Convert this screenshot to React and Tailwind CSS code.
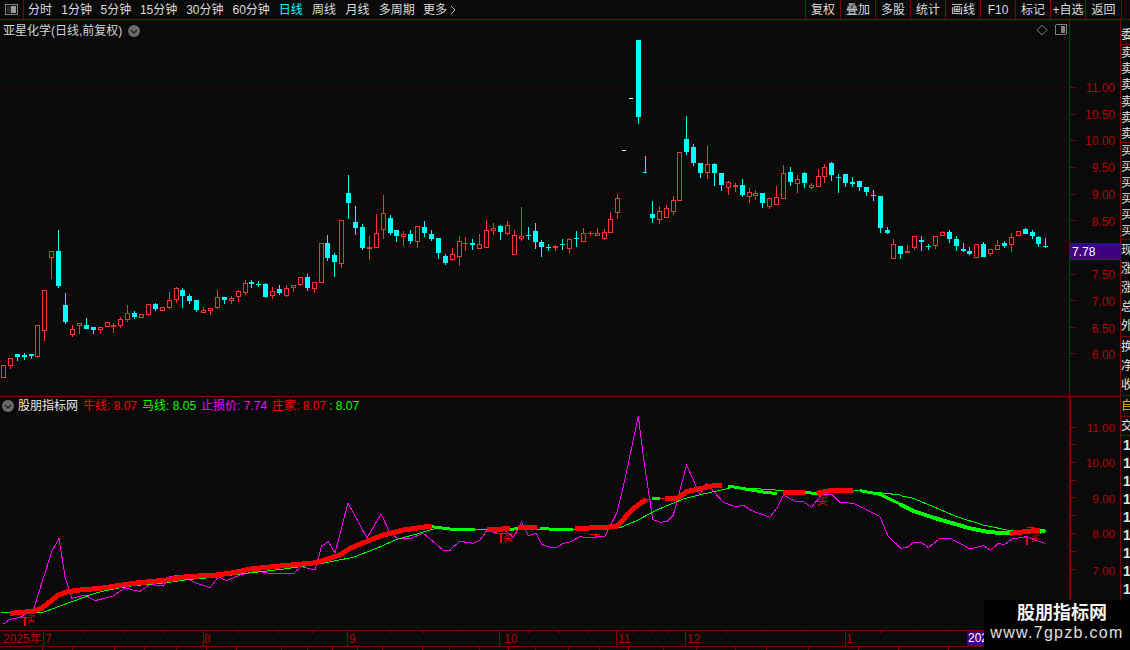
import React from 'react';

// candle rows: x, bodyTop, bodyBottom, wickTop, wickBottom (wick 0 = none), all in zoomed crop units
const RED = '#ff3232';
const CYAN = '#00ffff';

const seg1 = [
  ['r',10,436,473],['r',31,415,437,0,447],['c',52,402,411,0,422],['c',73,405,411,399,420],['c',94,402,408,0,416],
  ['r',112,316,410,0,413],['r',133,211,332,0,362],['r',154,94,113,0,177],['c',175,93,198,30,204],['c',196,255,306,219,312],
  ['r',217,328,344,316,350],['r',238,310,317,0,342],['c',259,315,327,294,0],['c',280,321,330,0,342],['r',301,322,329,0,342],
  ['r',322,307,320],['r',340,316,320,309,339],['r',361,298,318,292,324],['r',382,280,299,255,306],['c',403,279,291,273,297],
  ['r',424,283,293],['r',445,253,284,0,288],['c',466,252,267,249,273],['r',487,262,272],['r',508,241,263,216,267],
  ['r',529,205,239,202,249],['c',547,210,228,204,264],['c',568,228,244,222,252],['c',589,240,270,0,276],['r',610,271,278,262,0],
  ['r',631,265,272,0,285],['r',652,232,263,210,267],['c',673,232,240,0,252],['r',694,235,242,228,252],['r',715,214,231,210,246],
  ['r',736,190,218,180,225],['c',754,186,192,180,204],['c',775,191,194,183,201],['c',796,192,231,189,234],['r',817,214,227,201,237],
  ['c',838,207,219,195,225],['r',859,205,227,195,231],['r',880,196,203,0,216],['r',901,172,194,0,198],['c',922,171,204,162,213],
  ['r',943,187,206,0,219],['r',964,70,188],['c',982,69,114,45,123],['c',1003,105,126,99,171],
];
const seg2 = [
  ['r',4,181,313,0,323],['c',25,99,129,45,177],['c',46,186,204,138,225],['c',67,201,264,192,270],['r',88,262,267,228,300],
  ['r',109,220,263,162,0],['r',130,160,209,105,237],['c',151,174,219,165,225],['c',169,210,228,0,246],['r',190,221,230,213,258],
  ['c',211,222,243,210,252],['r',232,199,245,0,264],['c',253,201,219,183,231],['c',274,222,237,210,243],['c',295,234,279,0,297],
  ['c',316,288,309,282,315],['r',337,283,300,264,303],['r',358,244,290,228,318],['r',376,250,252,231,273],['c',397,249,255,237,270],
  ['r',418,253,266,222,0],['r',439,211,263,180,0],['r',460,205,212,189,225],['c',481,198,216,195,240],['r',502,195,221,183,225],
  ['r',523,226,284,210,0],['r',544,229,236,141,243],['c',565,225,228,201,240],['c',586,213,246,189,267],['c',604,247,261,240,291],
  ['c',625,261,264,252,273],['r',646,259,265,255,273],['c',667,252,255,237,270],['r',688,238,266,234,279],['c',709,234,237,213,261],
  ['r',730,220,245,204,0],['r',751,218,221,213,228],['r',772,220,227,204,0],['r',793,217,236,207,240],['r',811,178,218,156,0],
  ['r',832,115,158,102,177],
];
const seg3 = [
  ['c',115,30,261,0,282],['c',157,552,564,513,579],['r',178,544,570,528,582],['r',199,535,563,525,0],['r',220,511,545,498,555],
  ['r',238,367,512],['c',259,327,366,258,375],['c',280,351,399,342,408],['c',301,399,429,0,444],['r',322,403,429,348,447],
  ['c',343,402,429,399,468],['c',364,429,465,0,483],['r',385,457,473,453,495],['r',406,466,470,459,486],['c',427,465,495,447,501],
  ['r',448,487,500,474,519],['r',466,489,497,480,510],['c',487,489,519,0,534],['r',508,505,530,0,537],['r',529,502,525,468,0],
  ['r',550,430,506,405,0],['c',571,426,456,411,468],['r',592,448,461,435,489],['c',613,429,459,426,474],['r',634,466,473,459,477],
  ['r',655,439,470,417,0],['r',673,412,440,402,459],['c',694,399,435,396,453],['c',715,441,444,432,489],['c',736,432,459,0,471],
];
const seg4 = [
  ['c',15,72,99,0,111],['c',37,96,102,81,111],['c',58,93,111,0,123],['c',79,111,126,0,138],['c',100,135,138,120,153],
  ['c',121,138,234,0,249],['c',142,240,249,231,252],['r',160,283,326,267,0],['c',181,288,312,0,327],['r',202,304,309,285,0],
  ['r',223,259,293,0,300],['c',244,270,276,258,303],['c',265,288,292,282,300],['r',286,259,288,0,297],['r',307,247,257,244,0],
  ['c',328,247,267,240,279],['c',349,267,288,258,303],['c',370,297,303,279,306],['c',388,303,312,291,315],['r',409,283,323],
  ['c',430,282,321,276,0],['r',451,298,311,0,318],['r',472,286,299,270,0],['c',493,279,288,273,294],['r',514,262,285,249,306],
  ['r',535,244,257],['c',556,237,252,234,0],['c',577,247,258,240,267],['c',595,261,282,258,291],['c',616,289,292,264,294],
];

const toReal = (rows, ox, oy) =>
  rows.map(([k, x, t, b, wt = 0, wb = 0]) => ({
    k,
    x: ox + Math.floor(x / 3),
    t: oy + Math.round(t / 3),
    b: oy + Math.round(b / 3),
    wt: wt ? oy + Math.round(wt / 3) : 0,
    wb: wb ? oy + Math.round(wb / 3) : 0,
  }));

const candles = [
  ...toReal(seg1, 0, 220),
  ...toReal(seg2, 340, 160),
  ...toReal(seg3, 600, 30),
  ...toReal(seg4, 840, 150),
];

function Candle({ c }) {
  const color = c.k === 'r' ? RED : CYAN;
  const h = c.b - c.t;
  return (
    <g>
      {c.wt > 0 && <rect x={c.x} y={c.wt} width={1} height={c.t - c.wt} fill={color} />}
      {c.wb > 0 && <rect x={c.x} y={c.b} width={1} height={c.wb - c.b} fill={color} />}
      {c.k === 'c' || h <= 2 ? (
        <rect x={c.x - 2} y={c.t} width={5} height={Math.max(h, 1)} fill={color} />
      ) : (
        <rect x={c.x - 1.5} y={c.t + 0.5} width={4} height={h - 1} fill="#0a0a0a" stroke={color} strokeWidth={1} />
      )}
    </g>
  );
}

const Grid = ({ ys, w }) =>
  ys.map((y) => (
    <line key={y} x1={0} x2={w} y1={y + 0.5} y2={y + 0.5} stroke="#500000" strokeDasharray="1 3" />
  ));

function PriceChart() {
  return (
    <svg width={1070} height={376} viewBox="0 20 1070 376" shapeRendering="crispEdges" className="block">
      <Grid ys={[87, 140, 193, 246, 300, 353]} w={1066} />
      {candles.map((c, i) => <Candle key={i} c={c} />)}
      {/* white dashes and the lone gap day after the limit-up run */}
      <rect x={622} y={150} width={4} height={1} fill="#ffffff" />
      <rect x={629} y={98} width={4} height={1} fill="#ffffff" />
      <rect x={645} y={156} width={1} height={17} fill={CYAN} />
      <rect x={643} y={172} width={4} height={1} fill={CYAN} />
      {/* diamond + panel toggle */}
      <path d="M1042 25l5 5-5 5-5-5z" fill="none" stroke="#707070" shapeRendering="auto" />
      <rect x={1055.5} y={24.5} width={11} height={10} rx={1.5} fill="none" stroke="#808080" />
      <rect x={1061} y={26} width={4} height={7} fill="#808080" />
    </svg>
  );
}

// polylines, crop units -> real pixels
const pts = (list, ox, oy) =>
  list.map(([x, y]) => `${ox + x / 3},${oy + y / 3}`).join(' ');

const magenta = [
  pts([[10,312],[30,298],[60,292],[100,270],[155,95],[177,55],[195,170],[215,235],[255,225],[285,242],[340,228],[375,203],[400,210],[420,214],[450,193],[490,198],[510,170],[540,165],[590,190],[630,203],[655,170],[680,182],[720,165],[770,153],[810,160],[880,160],[905,140],[945,150],[965,78],[985,65],[1005,100]], 0, 520),
  '348,503 360,525 367,538 381,514 390,533 397,538 410,539 423,533 443,550 450,550',
  pts([[0,449],[30,424],[70,430],[90,420],[110,392],[135,397],[165,392],[190,412],[215,366],[235,408],[258,400],[275,433],[300,442],[320,442],[340,430],[360,426],[390,410],[420,414],[465,408],[500,340],[520,260],[565,48],[580,170],[608,358],[630,367],[650,365],[670,345],[710,195],[750,285],[770,250],[800,285],[820,307],[855,320],[880,316],[905,332],[960,352],[980,325],[1000,285],[1040,305],[1060,305],[1085,322],[1115,283],[1145,283],[1170,307],[1210,310],[1290,350],[1315,410],[1350,442]], 450, 400),
  pts([[0,505],[20,503],[40,488],[65,488],[85,503],[120,475],[150,475],[180,490],[210,507],[250,497],[272,511],[295,490],[312,495],[335,477],[380,470],[410,482],[435,490]], 900, 380),
].join(' ');

const thinGreen = [
  pts([[3,278],[60,278],[130,277],[180,258],[230,240],[290,218],[350,205],[400,197],[500,188],[570,178],[640,172],[720,162],[800,153],[860,146],[950,133],[1060,112],[1130,85],[1190,58],[1250,42],[1290,30],[1320,23],[1350,27]], 0, 520),
  pts([[0,387],[100,390],[180,388],[300,387],[400,388],[510,383],[560,362],[620,330],[700,297],[760,282],[850,262],[950,268],[1010,273],[1100,280],[1230,272],[1290,278],[1350,285]], 450, 400),
  pts([[0,347],[40,355],[100,380],[170,410],[250,435],[330,452],[420,455]], 900, 380),
].join(' ');

const thick = [
  ['r', 5, pts([[30,280],[100,274],[125,265],[150,245],[175,225],[200,216],[240,210],[300,205],[400,190],[500,180],[560,170],[650,165],[700,158],[750,147],[850,137],[950,128],[1020,105],[1050,85],[1090,68],[1150,45],[1210,30],[1295,18]], 0, 520)],
  ['g', 3, pts([[1295,20],[1350,27]], 0, 520)],
  ['g', 3, pts([[0,387],[75,390]], 450, 400)],
  ['r', 5, pts([[110,389],[180,386]], 450, 400)],
  ['g', 3, pts([[180,388],[205,386]], 450, 400)],
  ['r', 5, pts([[205,384],[260,383]], 450, 400)],
  ['g', 3, pts([[270,386],[370,390]], 450, 400)],
  ['r', 5, pts([[375,386],[500,380],[550,325],[590,298]], 450, 400)],
  ['r', 1, pts([[590,298],[605,297]], 450, 400)],
  ['g', 3, pts([[605,296],[630,296]], 450, 400)],
  ['r', 1, pts([[630,296],[645,296]], 450, 400)],
  ['r', 5, pts([[645,296],[680,296],[710,275],[800,255],[815,255]], 450, 400)],
  ['g', 3, pts([[835,258],[950,278],[980,280]], 450, 400)],
  ['r', 5, pts([[1000,279],[1065,278]], 450, 400)],
  ['g', 3, pts([[1065,278],[1100,280]], 450, 400)],
  ['r', 5, pts([[1100,280],[1140,272],[1210,272]], 450, 400)],
  ['g', 3, pts([[1230,272],[1290,283],[1350,312]], 450, 400)],
  ['g', 4, pts([[0,372],[40,393],[100,413],[210,445],[270,457],[330,459]], 900, 380)],
  ['r', 5, pts([[330,460],[420,450]], 900, 380)],
  ['g', 4, pts([[420,455],[437,451]], 900, 380)],
];

const markers = [
  { x: 24, y: 617, h: 9, w: 8 },
  { x: 500, y: 533, h: 10, w: 12 },
  { x: 595, y: 534, h: 3, w: 10 },
  { x: 1026, y: 537, h: 8, w: 10 },
];

function IndicatorChart() {
  return (
    <svg width={1070} height={233} viewBox="0 397 1070 233" shapeRendering="crispEdges" className="block">
      <Grid ys={[425, 461, 497, 533, 570, 606]} w={1066} />
      <polyline points={magenta} fill="none" stroke="#ff00ff" strokeWidth={1} />
      <polyline points={thinGreen} fill="none" stroke="#00ff00" strokeWidth={1} />
      {thick.map(([k, w, p], i) => (
        <polyline key={i} points={p} fill="none" stroke={k === 'r' ? '#ff0000' : '#00ff00'} strokeWidth={w} />
      ))}
      {markers.map((m) => (
        <g key={m.x} fill="#ff0000">
          <rect x={m.x} y={m.y} width={2} height={m.h} />
          <rect x={m.x - m.w / 2} y={m.y} width={m.w} height={1} />
        </g>
      ))}
      <rect x={1027} y={527} width={8} height={1} fill="#ff0000" />
      <text x={816} y={505} fontSize={12} fill="#ff0000">买</text>
      <text x={503} y={541} fontSize={10} fill="#ff0000">买</text>
      <text x={1031} y={541} fontSize={9} fill="#ff0000">买</text>
      <text x={27} y={622} fontSize={8} fill="#ff0000">买</text>
    </svg>
  );
}

function Axis({ height, originY, labels, ticks }) {
  return (
    <svg width={50} height={height} viewBox={`1071 ${originY} 50 ${height}`} shapeRendering="crispEdges" className="block">
      {ticks.map((y) => (
        <rect key={y} x={1071} y={y} width={5} height={1} fill="#8b0000" />
      ))}
      {labels.map(([t, y]) => (
        <text key={t} x={1116} y={y + 5} textAnchor="end" fontSize={12} fill="#b80000" shapeRendering="auto">{t}</text>
      ))}
    </svg>
  );
}

const priceLabels = [['11.00',87],['10.50',114],['10.00',140],['9.50',167],['9.00',194],['8.50',221],['7.50',274],['7.00',301],['6.50',328],['6.00',354]];
const subLabels = [['11.00',425],['10.00',461],['9.00',498],['8.00',534],['7.00',571]];

const Chevron = () => (
  <span className="flex h-3 w-3 shrink-0 items-center justify-center rounded-full bg-[#6b6b6b]">
    <svg width="8" height="5" viewBox="0 0 8 5"><path d="M1 1l3 3 3-3" fill="none" stroke="#1a1a1a" strokeWidth="1.2" /></svg>
  </span>
);

const leftTabs = [
  ['分时', 'w-[24px]'], ['1分钟', 'w-[30px]'], ['5分钟', 'w-[30px]'], ['15分钟', 'w-[37px]'], ['30分钟', 'w-[37px]'],
  ['60分钟', 'w-[37px]'], ['日线', 'w-[24px] text-[#00ffff]'], ['周线', 'w-[24px]'], ['月线', 'w-[24px]'], ['多周期', 'w-[35px]'],
];
const rightTabs = ['复权', '叠加', '多股', '统计', '画线', 'F10', '标记'];

function Toolbar() {
  return (
    <div className="flex h-[20px] items-stretch border-b border-[#800000] text-xs text-[#dcdcdc]">
      <div className="flex w-[24px] items-center justify-center border-r border-[#800000]">
        <svg width="13" height="11" viewBox="0 0 13 11" shapeRendering="crispEdges">
          <rect x="0.5" y="0.5" width="12" height="10" rx="1" fill="none" stroke="#808080" />
          <rect x="2" y="2" width="4" height="7" fill="#2a2a2a" />
          <rect x="6" y="2" width="5" height="7" fill="#9a9a9a" />
        </svg>
      </div>
      <div className="flex flex-1 items-center gap-[9.3px] pl-[4px]">
        {leftTabs.map(([t, cls]) => (
          <span key={t} className={`${cls} whitespace-nowrap`}>{t}</span>
        ))}
        <span className="flex items-center gap-[3px] whitespace-nowrap">
          更多
          <svg width="6" height="10" viewBox="0 0 6 10"><path d="M1 1l4 4-4 4" fill="none" stroke="#c8c8c8" /></svg>
        </span>
      </div>
      {rightTabs.map((t) => (
        <div key={t} className="flex w-[35px] items-center justify-center border-l border-[#800000]">{t}</div>
      ))}
      <div className="flex w-[35px] items-center justify-center whitespace-nowrap border-l border-[#800000]">+自选</div>
      <div className="flex w-[37px] items-center justify-center border-x border-[#800000]">返回</div>
      <div className="w-[8px]" />
    </div>
  );
}

function PricePane() {
  return (
    <div className="relative flex h-[377px] border-b border-[#800000]">
      <div className="w-[1070px] shrink-0 border-r border-[#800000]">
        <PriceChart />
      </div>
      <Axis height={376} originY={20} labels={priceLabels} ticks={[87,114,140,167,194,220,274,300,327,353]} />
      <div className="absolute left-[3px] top-[3px] flex items-center gap-[6px] text-xs text-[#d4d4d4]">
        <span>亚星化学(日线,前复权)</span>
        <Chevron />
      </div>
      <div className="absolute left-[1070px] top-[223px] flex h-[17px] w-[51px] items-center border-y border-[#800000] bg-[#400080] pl-[2px] text-xs text-white">7.78</div>
    </div>
  );
}

function IndicatorPane() {
  return (
    <div className="relative flex h-[233px]">
      <div className="w-[1071px] shrink-0 border-r-2 border-[#800000]">
        <IndicatorChart />
      </div>
      <Axis height={233} originY={397} labels={subLabels} ticks={[425,443,461,479,497,515,533,552,570,588,606]} />
      <div className="absolute left-[2px] top-[1px] flex items-center whitespace-nowrap text-xs">
        <Chevron />
        <span className="ml-[4px] text-[#e8e8e8]">股朋指标网</span>
        <span className="ml-[5px] text-[#ff0000]">牛线: 8.07</span>
        <span className="ml-[5px] text-[#00ff00]">马线: 8.05</span>
        <span className="ml-[5px] text-[#ff00ff]">止损价: 7.74</span>
        <span className="ml-[5px] text-[#ff0000]">庄家: 8.07</span>
        <span className="ml-[3px] text-[#00ff00]">: 8.07</span>
      </div>
    </div>
  );
}

// label, label x, divider x
const monthMarks = [['2025年', 3, 0], ['7', 45, 43], ['8', 204, 203], ['9', 349, 347], ['10', 504, 499], ['11', 618, 616], ['12', 687, 685], ['1', 846, 845]];
const dateTicks = [83, 123, 163, 238, 278, 312, 390, 423, 461, 528, 559, 587, 633, 652, 668, 726, 765, 805, 880, 914, 949];

function DateAxis() {
  return (
    <div className="relative h-[17px] border-y border-[#800000]">
      <svg width={1121} height={15} shapeRendering="crispEdges" className="block">
        {monthMarks.filter((m) => m[2] > 0).map(([t, , x]) => (
          <rect key={t} x={x} y={0} width={1} height={15} fill="#8b0000" />
        ))}
        {dateTicks.map((x) => <rect key={x} x={x} y={0} width={1} height={2} fill="#8b0000" />)}
        {monthMarks.map(([t, x]) => (
          <text key={t} x={x} y={12} fontSize={12} fill="#b80000" shapeRendering="auto">{t}</text>
        ))}
      </svg>
      <div className="absolute left-[967px] top-0 h-[15px] w-[17px] overflow-hidden whitespace-nowrap bg-[#400080] pl-[1px] text-xs leading-[15px] text-white">2026</div>
    </div>
  );
}

const bottomCells = [43, 30, 42, 30, 32, 30, 30, 45, 26, 25, 25, 25, 40, 27, 30, 29, 27, 33, 31, 29, 35, 33, 39, 31, 42, 50, 40, 50];

function BottomTabs() {
  return (
    <div className="flex h-[3px] overflow-hidden">
      {bottomCells.map((w, i) => (
        <div key={i} className="shrink-0 border-r border-[#800000]" style={{ width: w }} />
      ))}
    </div>
  );
}

const strip = [
  { h: 'h-[20px] mt-[5px]', rows: ['委'] },
  { h: 'h-[98px]', rows: ['卖', '卖', '卖', '卖', '卖', '卖'] },
  { h: 'h-[97px]', rows: ['买', '买', '买', '买', '买', '买'] },
  { h: 'h-[97px]', rows: ['现', '涨', '涨', '总', '外'] },
  { h: 'h-[59px]', rows: ['换', '净', '收'] },
];

function SideStrip() {
  return (
    <div className="h-full w-[9px] shrink-0 overflow-hidden text-xs text-[#e4e4e4]">
      {strip.map((s, i) => (
        <div key={i} className={`${s.h} flex flex-col justify-around overflow-hidden border-b border-[#800000] whitespace-nowrap`}>
          {s.rows.map((r, j) => <span key={j} className="block leading-[14px]">{r}</span>)}
        </div>
      ))}
      <div className="flex h-[21px] items-center whitespace-nowrap border-b border-[#800000] text-[#e0c000]">自</div>
      <div className="flex h-[19px] items-center whitespace-nowrap border-b border-[#800000]">交</div>
      <div className="flex flex-col pl-[2px] text-sm font-bold">
        {['1','1','1','1','1','1','1','1','1','1'].map((n, i) => (
          <span key={i} className="h-[18px] leading-[18px]">{n}</span>
        ))}
      </div>
    </div>
  );
}

export default function App() {
  return (
    <div className="relative h-[650px] w-[1130px] overflow-hidden bg-[#0a0a0a] font-['Liberation_Sans','Noto_Sans_CJK_SC',sans-serif]">
      <Toolbar />
      <div className="flex h-[630px]">
        <div className="w-[1121px] shrink-0 border-r border-[#800000]">
          <PricePane />
          <IndicatorPane />
          <DateAxis />
          <BottomTabs />
        </div>
        <SideStrip />
      </div>
      {/* site watermark stamped over the corner */}
      <div className="absolute bottom-0 right-0 flex h-[50px] w-[146px] flex-col items-center bg-black pt-[3px] text-center">
        <span className="pl-[10px] text-lg font-bold leading-[21px] text-[#f4f4f4]">股朋指标网</span>
        <span className="text-[16px] leading-[18px] tracking-[1.3px] text-[#e0e0e0]">www.7gpzb.com</span>
      </div>
    </div>
  );
}
